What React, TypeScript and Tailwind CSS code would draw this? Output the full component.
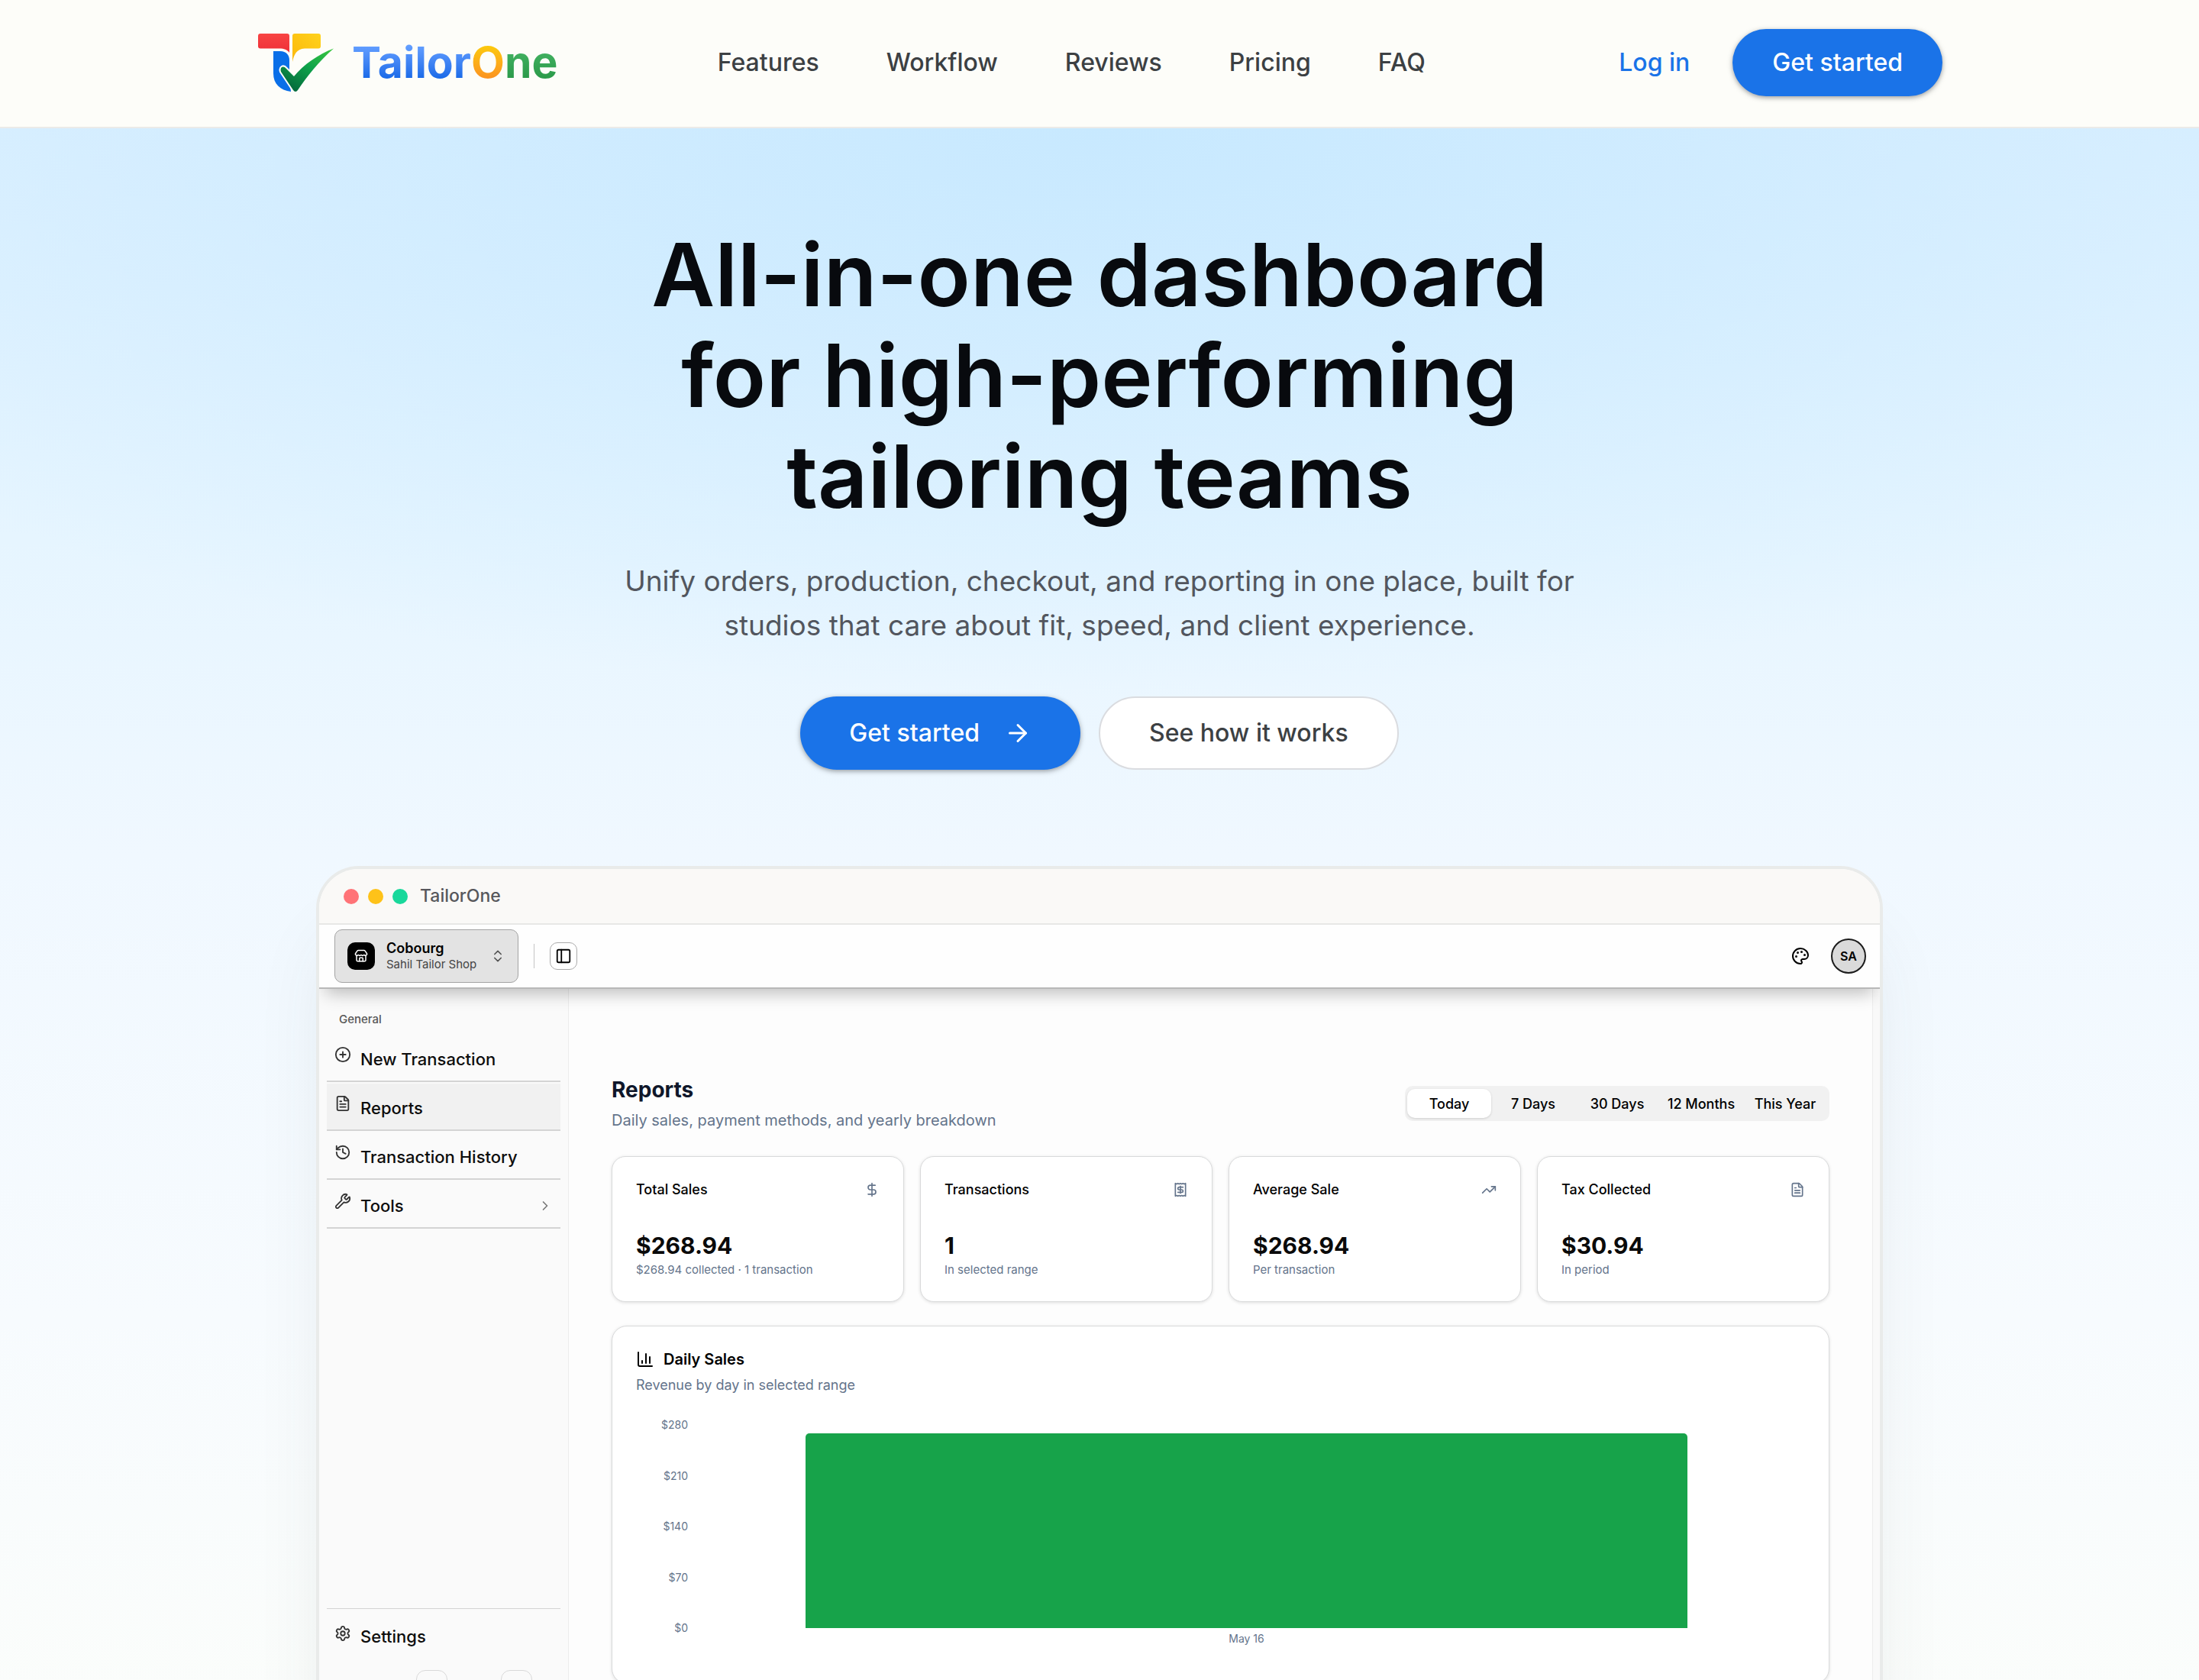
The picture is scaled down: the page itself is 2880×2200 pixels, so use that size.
import type { ReactNode } from "react";
import {
  ArrowRight,
  ChartColumn,
  ChevronRight,
  ChevronsUpDown,
  CirclePlus,
  DollarSign,
  FileText,
  History,
  Palette,
  PanelLeft,
  Receipt,
  Settings,
  Store,
  TrendingUp,
  Wrench,
} from "lucide-react";

const navLinks = ["Features", "Workflow", "Reviews", "Pricing", "FAQ"];

const ranges = ["Today", "7 Days", "30 Days", "12 Months", "This Year"];

const stats = [
  {
    title: "Total Sales",
    value: "$268.94",
    note: "$268.94 collected · 1 transaction",
    icon: <DollarSign size={20} />,
  },
  {
    title: "Transactions",
    value: "1",
    note: "In selected range",
    icon: <Receipt size={20} />,
  },
  {
    title: "Average Sale",
    value: "$268.94",
    note: "Per transaction",
    icon: <TrendingUp size={20} />,
  },
  {
    title: "Tax Collected",
    value: "$30.94",
    note: "In period",
    icon: <FileText size={20} />,
  },
];

const chartMax = 280;
const ticks = [280, 210, 140, 70, 0];
const dailySales = [{ day: "May 16", total: 268.94 }];

export default function App() {
  return (
    <div className="flex h-screen flex-col overflow-hidden bg-[#fcfdf9] font-['Inter','Liberation_Sans',sans-serif]">
      <SiteHeader />

      <main className="flex-1 bg-[radial-gradient(ellipse_70%_36%_at_50%_0%,#c8e9ff_0%,#c8e9ff00_100%),linear-gradient(to_bottom,#dcf0ff_0%,#e6f5ff_26%,#f0f8ff_46%,#f7fbfe_75%,#fbfdfb_100%)] px-10">
        {/* HERO */}
        <section className="flex flex-col items-center pt-[126px] text-center">
          <h1 className="max-w-[1300px] text-[114px] leading-[132px] font-semibold text-[#080a0e]">
            All-in-one dashboard
            <br />
            for high-performing
            <br />
            tailoring teams
          </h1>

          <p className="mt-[42px] max-w-[1300px] text-[37px] leading-[58px] text-[#52565e]">
            Unify orders, production, checkout, and reporting in one place, built for
            studios that care about fit, speed, and client experience.
          </p>

          <div className="mt-[64px] flex gap-6">
            <button className="flex h-24 items-center gap-8 rounded-full bg-[#1a73e8] px-16 text-[32px] font-medium text-white shadow-[0_2px_6px_rgba(60,64,67,0.5)]">
              Get started
              <ArrowRight size={36} />
            </button>
            <button className="h-24 rounded-full border-2 border-[#dadce0] bg-white px-16 text-[32px] font-medium text-[#3c4043]">
              See how it works
            </button>
          </div>
        </section>

        <DashboardWindow />
      </main>
    </div>
  );
}

function SiteHeader() {
  return (
    <header className="border-b-2 border-[#ebebe9] bg-[#fdfdf9]">
      <div className="mx-auto flex h-[166px] max-w-[2208px] items-center justify-between pb-[2px]">
        <a href="#" className="flex items-center gap-6 pl-[2px]">
          <Logo />
          <span className="text-[57px] leading-[76px] font-bold">
            <span className="bg-gradient-to-b from-[#619dff] from-20% to-[#1a6be8] to-80% bg-clip-text text-transparent">
              Tailor
            </span>
            <span className="bg-gradient-to-b from-[#fcc80c] from-20% to-[#fb9320] to-80% bg-clip-text text-transparent">
              O
            </span>
            <span className="bg-gradient-to-b from-[#45b565] from-20% to-[#2b9a4a] to-80% bg-clip-text text-transparent">
              ne
            </span>
          </span>
        </a>

        <nav className="flex gap-[88px] pl-1 text-[32px] font-medium text-[#3c4043]">
          {navLinks.map((link) => (
            <a key={link} href="#">
              {link}
            </a>
          ))}
        </nav>

        <div className="flex items-center gap-2 text-[32px] font-medium">
          <a href="#" className="px-12 text-[#1a73e8]">
            Log in
          </a>
          <button className="h-[88px] rounded-full bg-[#1a73e8] px-[52px] text-white shadow-[0_2px_6px_rgba(60,64,67,0.5)]">
            Get started
          </button>
        </div>
      </div>
    </header>
  );
}

function DashboardWindow() {
  return (
    <section className="mx-auto mt-[126px] max-w-[2052px] overflow-hidden rounded-t-[56px] border-4 border-b-0 border-[#e9ebea] bg-[#fdfdfd] shadow-[0_80px_100px_-20px_rgba(60,64,67,0.1)]">
      {/* TITLE BAR */}
      <div className="relative z-10 flex h-[73px] items-center gap-3 border-b-2 border-[#e8e8e6] bg-[#faf9f7] px-8">
        <span className="size-5 rounded-full bg-[#ff7377]" />
        <span className="size-5 rounded-full bg-[#fec219]" />
        <span className="size-5 rounded-full bg-[#19d89b]" />
        <span className="ml-1 text-[23px] font-medium text-[#57585c]">TailorOne</span>
      </div>

      <TopBar />

      <div className="flex">
        <Sidebar />
        <Reports />
        <div className="w-[10px] border-l border-[#eeeeee] bg-[#f9f9f9]" />
      </div>
    </section>
  );
}

function TopBar() {
  return (
    <div className="relative flex h-[84px] items-center border-b-2 border-[#b8b8b8] bg-[#fefefe] pr-[18px] pl-5 text-black shadow-[0_14px_22px_-8px_rgba(0,0,0,0.25)]">
      <button className="flex h-[70px] w-[241px] items-center rounded-[10px] border border-[#a3a3a3] bg-[#e3e3e3] px-4 text-left">
        <span className="flex size-9 items-center justify-center rounded-[10px] bg-black text-white">
          <Store size={18} />
        </span>
        <span className="ml-[15px] flex-1">
          <span className="block text-[18px] leading-[22px] font-semibold">Cobourg</span>
          <span className="block text-[15px] leading-5 text-[#444444]">Sahil Tailor Shop</span>
        </span>
        <ChevronsUpDown size={20} className="text-[#555555]" />
      </button>

      <span className="ml-5 h-8 w-px bg-[#c4c4c4]" />

      <button
        aria-label="Toggle sidebar"
        className="ml-5 flex size-9 items-center justify-center rounded-[10px] border border-[#ababab] bg-white"
      >
        <PanelLeft size={22} />
      </button>

      <button aria-label="Theme" className="mr-7 ml-auto">
        <Palette size={24} />
      </button>
      <button className="size-[46px] rounded-full border-2 border-[#1c1c1c] bg-[#dadada] text-[16px] font-semibold">
        SA
      </button>
    </div>
  );
}

function Sidebar() {
  return (
    <aside className="flex w-[327px] flex-col border-r border-[#ececec] bg-[#fafafa] px-[10px] text-[#0d0d0d]">
      <p className="mt-7 px-4 text-[15px] leading-6 font-medium text-[#575757]">General</p>

      <nav className="mt-2 flex flex-col gap-[2px]">
        <SidebarItem icon={<CirclePlus size={22} />} label="New Transaction" />
        <SidebarItem icon={<FileText size={22} />} label="Reports" active />
        <SidebarItem icon={<History size={22} />} label="Transaction History" />
        <SidebarItem
          icon={<Wrench size={22} />}
          label="Tools"
          trailing={<ChevronRight size={20} className="ml-auto text-[#777777]" />}
        />
      </nav>

      <div className="mt-auto border-t border-[#d4d4d4]">
        <a href="#" className="flex h-[72px] items-center gap-3 px-[10px]">
          <Settings size={22} className="mb-2 text-[#333333]" />
          <span className="text-[22px] font-medium">Settings</span>
        </a>
        <div className="flex h-[58px] gap-[70px] pt-2 pl-[117px]">
          <button aria-label="Previous" className="size-[41px] rounded-[12px] border border-[#d9d9d9]" />
          <button aria-label="Next" className="size-[41px] rounded-[12px] border border-[#d9d9d9]" />
        </div>
      </div>
    </aside>
  );
}

function SidebarItem({
  icon,
  label,
  active,
  trailing,
}: {
  icon: ReactNode;
  label: string;
  active?: boolean;
  trailing?: ReactNode;
}) {
  return (
    <a
      href="#"
      className={`flex h-[62px] items-center gap-3 border-b-2 border-[#d4d4d4] px-[10px] pt-1 ${
        active ? "bg-[#f1f1f1]" : ""
      }`}
    >
      <span className="mb-3 text-[#333333]">{icon}</span>
      <span className="text-[22px] font-medium">{label}</span>
      {trailing}
    </a>
  );
}

function Reports() {
  return (
    <div className="min-w-0 flex-1 px-14 pt-[114px] pb-8">
      <div className="flex items-center justify-between">
        <div>
          <h2 className="text-[28px] leading-9 font-bold text-[#0f172a]">Reports</h2>
          <p className="mt-2 text-[20px] leading-7 text-[#64748b]">
            Daily sales, payment methods, and yearly breakdown
          </p>
        </div>

        <div className="grid h-[46px] w-[556px] grid-cols-5 rounded-[10px] bg-[#f1f1f1] px-[3px] py-1 text-[18px] font-medium text-black">
          {ranges.map((range, i) => (
            <button
              key={range}
              className={`rounded-[10px] whitespace-nowrap ${
                i === 0 ? "bg-white shadow-[0_1px_3px_rgba(0,0,0,0.15)]" : ""
              }`}
            >
              {range}
            </button>
          ))}
        </div>
      </div>

      {/* STATS */}
      <div className="mt-[33px] grid grid-cols-4 gap-[21px]">
        {stats.map((stat) => (
          <div
            key={stat.title}
            className="h-[191px] rounded-[18px] border border-[#d9dadb] bg-white px-[31px] pt-[31px] shadow-[0_1px_4px_rgba(0,0,0,0.12)]"
          >
            <div className="flex items-center justify-between">
              <h3 className="text-[18px] leading-6 font-medium text-black">{stat.title}</h3>
              <span className="text-[#64748b]">{stat.icon}</span>
            </div>
            <p className="mt-[41px] text-[30px] leading-10 font-bold text-[#0a0a0a]">{stat.value}</p>
            <p className="mt-[2px] text-[15px] leading-5 text-[#64748b]">{stat.note}</p>
          </div>
        ))}
      </div>

      <DailySales />
    </div>
  );
}

function DailySales() {
  return (
    <div className="mt-[31px] rounded-[20px] border border-[#d9dadb] bg-white px-[31px] pt-[29px] pb-[50px] shadow-[0_1px_4px_rgba(0,0,0,0.12)]">
      <h3 className="flex items-center gap-3 text-[20px] leading-7 font-semibold text-black">
        <ChartColumn size={24} />
        Daily Sales
      </h3>
      <p className="mt-[6px] text-[18px] leading-7 text-[#64748b]">Revenue by day in selected range</p>

      {/* CHART */}
      <div className="mt-[30px] flex">
        <div className="flex h-[282px] w-[68px] flex-col justify-between text-right text-[14px] leading-4 text-[#64748b]">
          {ticks.map((tick) => (
            <span key={tick}>${tick}</span>
          ))}
        </div>
        <div className="ml-[10px] flex flex-1 pt-2 pr-[10px]">
          {dailySales.map((entry) => (
            <div key={entry.day} className="flex-1 text-center">
              <div className="flex h-[266px] items-end px-[10%]">
                <div
                  className="w-full rounded-t-[5px] bg-[#17a34a]"
                  style={{ height: `${(entry.total / chartMax) * 100}%` }}
                />
              </div>
              <p className="mt-[6px] text-[14px] leading-4 text-[#64748b]">{entry.day}</p>
            </div>
          ))}
        </div>
      </div>
    </div>
  );
}

function Logo() {
  return (
    <svg width="99" height="77" viewBox="0 0 99 77" fill="none" aria-hidden="true">
      <defs>
        <linearGradient id="logo-red" x1="0" y1="0" x2="0" y2="1">
          <stop stopColor="#f84444" />
          <stop offset="1" stopColor="#ee2f37" />
        </linearGradient>
        <linearGradient id="logo-yellow" x1="1" y1="0" x2="0" y2="1">
          <stop stopColor="#ffd21c" />
          <stop offset="1" stopColor="#fbb80c" />
        </linearGradient>
        <linearGradient id="logo-green" x1="1" y1="0" x2="0.3" y2="1">
          <stop stopColor="#3cc83e" />
          <stop offset="0.5" stopColor="#0fa34b" />
          <stop offset="1" stopColor="#046b3d" />
        </linearGradient>
      </defs>
      <path
        d="M3 0H38Q41 0 41 3V25C38 21 34 19.500 28 19.500H3Q0 19.500 0 16.500V3Q0 0 3 0Z"
        fill="url(#logo-red)"
      />
      <path
        d="M48 0H79Q82 0 82 3V16.500Q82 19.500 79 19.500H61C50 20 47 28 45 37V3Q45 0 48 0Z"
        fill="url(#logo-yellow)"
      />
      <path d="M20 23H29C37 23 41 28 41 35V58L43 76C29 74 20 66 20 52Z" fill="#0a6fe8" />
      <path
        d="M30 50C28 44 33 41 37 46L47 56C59 41 79 27 99 19.500C80 36 64 56 52 74Q49 78 46 74Z"
        fill="url(#logo-green)"
        stroke="#fdfdf9"
        strokeWidth="4"
        strokeLinejoin="round"
        paintOrder="stroke"
      />
    </svg>
  );
}
